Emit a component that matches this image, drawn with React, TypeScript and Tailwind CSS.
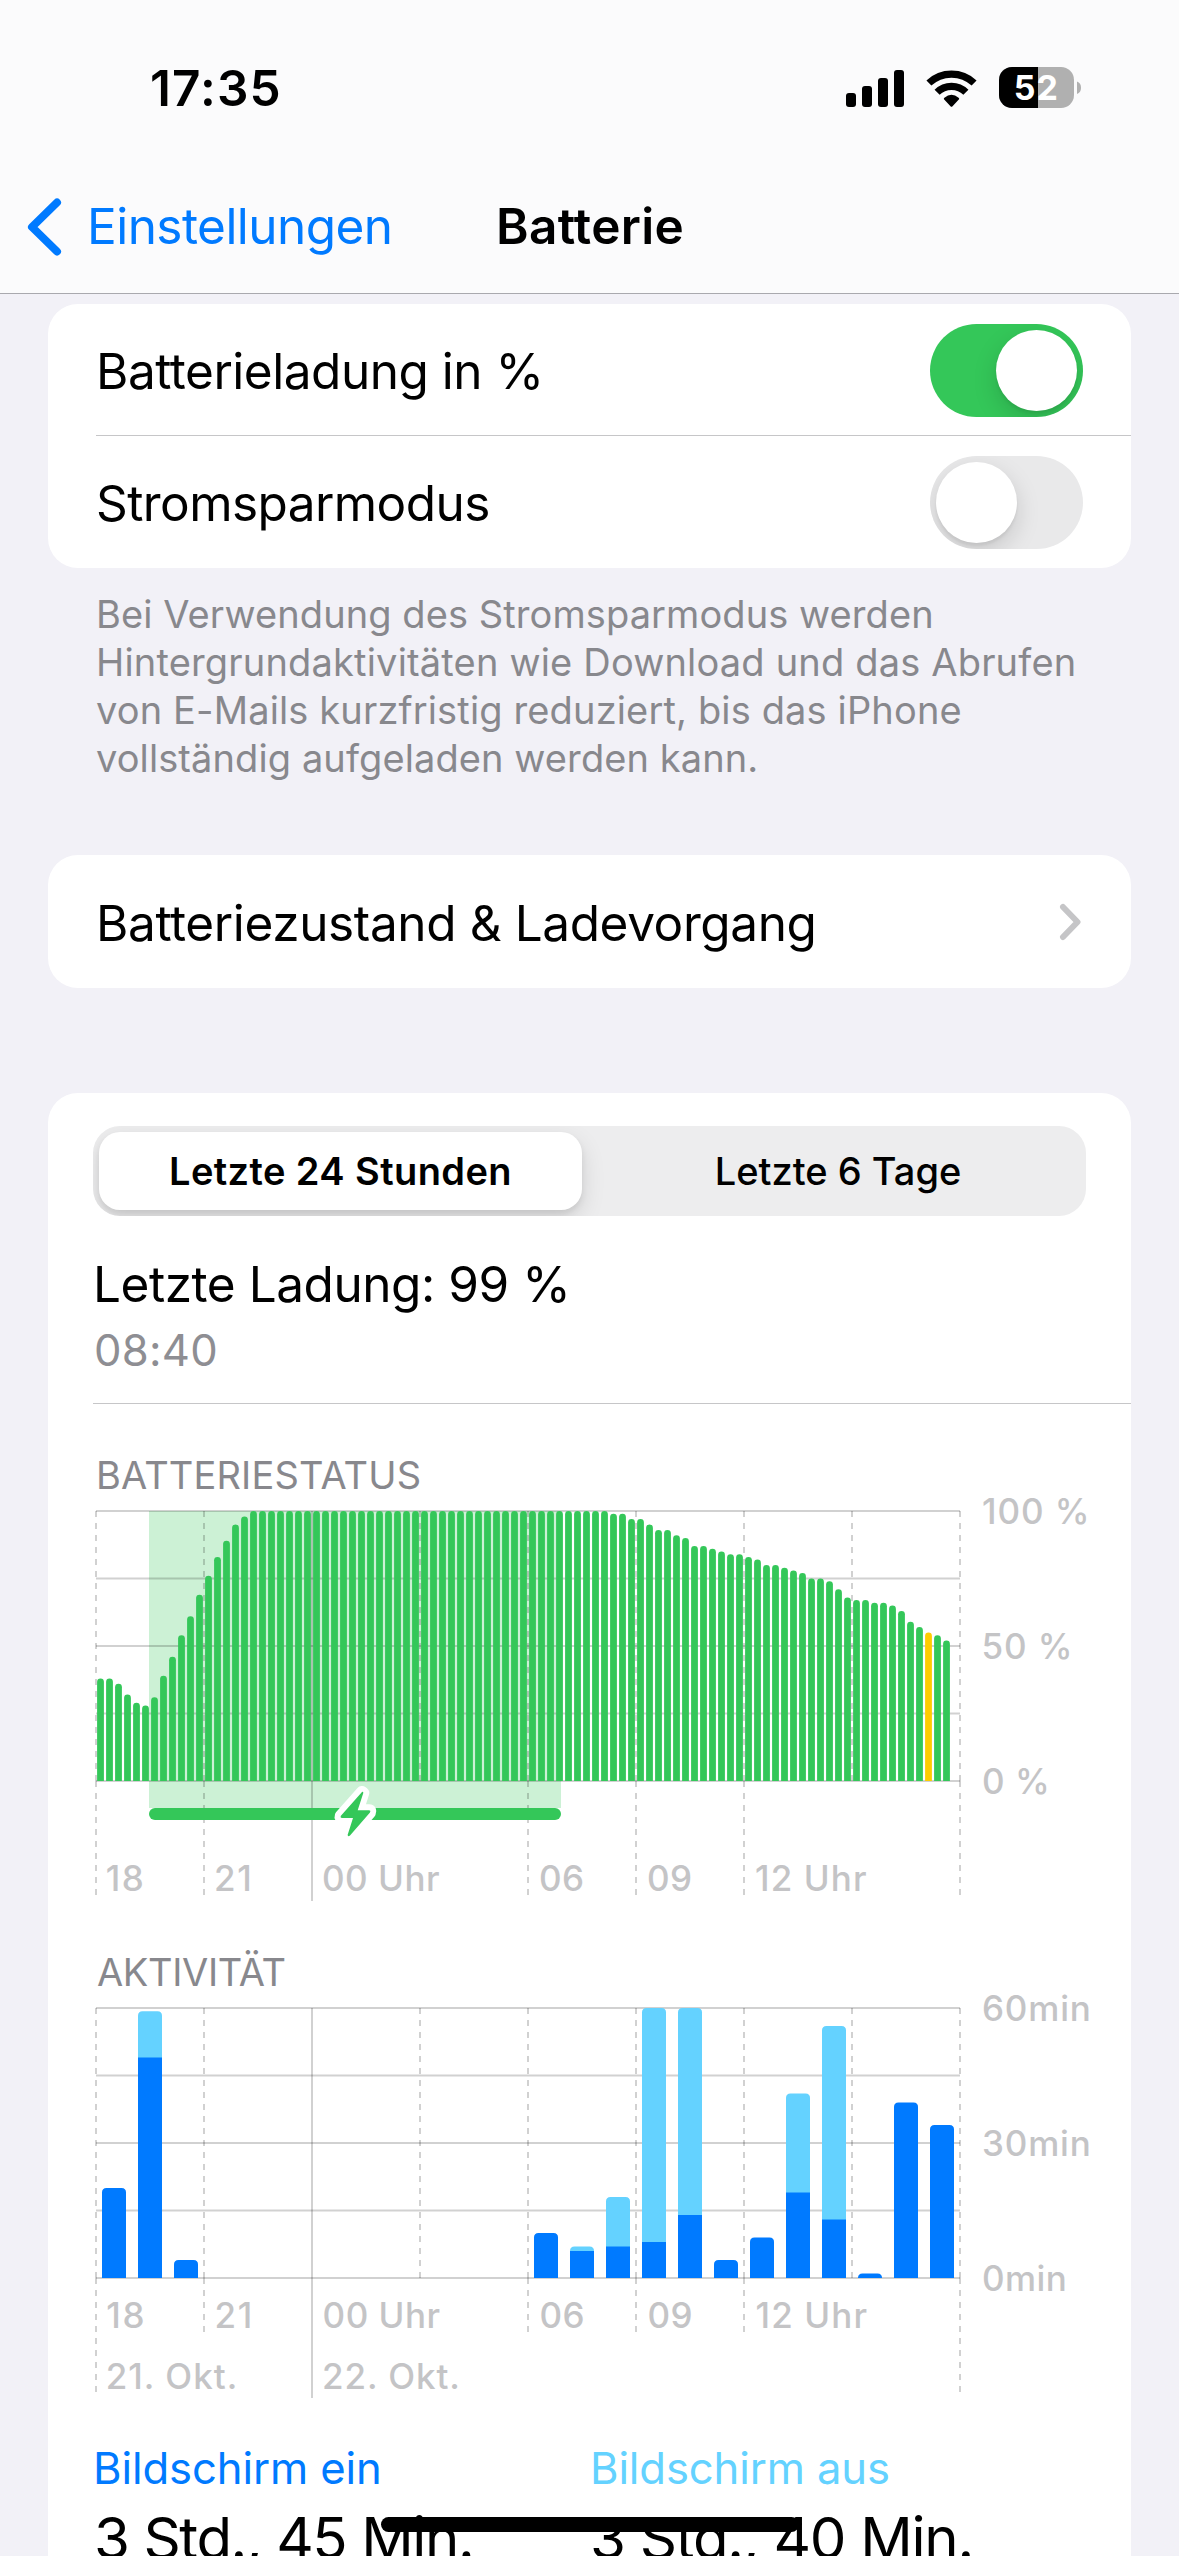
import React, { useState } from "react";

// battery level in percent, one value per 15 minutes
const levels = [
  38, 38, 36, 32, 29, 28, 31, 39, 46, 54, 61, 69, 76, 83, 89, 95, 98,
  ...Array(40).fill(100),
  99, 99, 97, 97, 95, 93, 93, 91, 90, 87, 87, 86, 85, 84, 84, 83, 82, 80, 80,
  79, 78, 77, 75, 75, 74, 71, 68, 67, 67, 66, 66, 65, 63, 59, 57, 55, 54, 52,
];
const lowPowerIndex = 92;

// minutes per hour: screen on / total
const activity = [
  { hour: 0, on: 20, total: 20 },
  { hour: 1, on: 49, total: 59.3 },
  { hour: 2, on: 4, total: 4 },
  { hour: 12, on: 10, total: 10 },
  { hour: 13, on: 6, total: 7 },
  { hour: 14, on: 7, total: 18 },
  { hour: 15, on: 8, total: 60 },
  { hour: 16, on: 14, total: 60 },
  { hour: 17, on: 4, total: 4 },
  { hour: 18, on: 9, total: 9 },
  { hour: 19, on: 19, total: 41 },
  { hour: 20, on: 13, total: 56 },
  { hour: 21, on: 1, total: 1 },
  { hour: 22, on: 39, total: 39 },
  { hour: 23, on: 34, total: 34 },
];

const hourLabels = [
  { x: 12.7, text: "18", spacing: 1.6 },
  { x: 121, text: "21", spacing: 1.6 },
  { x: 229, text: "00 Uhr", spacing: 0.5 },
  { x: 446, text: "06", spacing: 0.4 },
  { x: 554, text: "09", spacing: 0.4 },
  { x: 662, text: "12 Uhr", spacing: 1.1 },
];

const Toggle = ({ checked, onChange }: { checked: boolean; onChange: () => void }) => (
  <button
    type="button"
    role="switch"
    aria-checked={checked}
    onClick={onChange}
    className={`flex h-[93px] w-[153px] overflow-hidden rounded-full p-1.5 ${
      checked ? "justify-end bg-[#34c759]" : "justify-start bg-[#e9e9ea]"
    }`}
  >
    <span className="h-[81px] w-[81px] rounded-full bg-white shadow-[0_9px_24px_rgba(0,0,0,0.15),0_3px_3px_rgba(0,0,0,0.06)]" />
  </button>
);

const Grid = ({ top, longDash, lineEnd }: { top: number; longDash: number[]; lineEnd: number }) => {
  const bottom = top + 270;
  return (
    <g stroke="#000" strokeOpacity="0.18" strokeWidth="2">
      {[0, 1, 2, 3, 4].map((i) => (
        <line key={i} x1="3" x2="867" y1={top + i * 67.5} y2={top + i * 67.5} />
      ))}
      {[0, 1, 3, 4, 5, 6, 7, 8].map((i) => (
        <g key={i} strokeDasharray="6 6">
          <line x1={3 + i * 108} x2={3 + i * 108} y1={top} y2={bottom} />
          {i !== 3 && i !== 7 && (
            <line
              x1={3 + i * 108}
              x2={3 + i * 108}
              y1={bottom}
              y2={longDash.includes(i) ? bottom + 114 : lineEnd}
            />
          )}
        </g>
      ))}
      <line x1="219" x2="219" y1={top} y2={bottom + 120} />
    </g>
  );
};

const BatteryChart = () => (
  <svg width="1038" height="406" viewBox="0 0 1038 406" className="block overflow-visible">
    <rect x="56" y="11" width="412" height="297" fill="#34c759" fillOpacity="0.25" />
    <Grid top={11} longDash={[0, 1, 4, 5, 6, 8]} lineEnd={395} />
    {levels.map((level, i) => {
      const x = 4.1 + i * 9;
      const y = 281 - level * 2.7;
      return (
        <path
          key={i}
          d={`M${x} 281V${y + 3.4}a3.4 3.4 0 0 1 6.8 0V281Z`}
          fill={i === lowPowerIndex ? "#ffcc00" : "#34c759"}
        />
      );
    })}
    <rect x="56" y="308" width="412" height="12" rx="6" fill="#34c759" />
    <path
      d="M269 292L247.7 316Q247 318 249 318H260L254.6 335Q255 337 257 335.5L277 312.5Q278 310.3 276 310.3H264.7L270.3 293Z"
      fill="#fff"
      stroke="#fff"
      strokeWidth="12"
      strokeLinejoin="round"
    />
    <path
      d="M269 292L247.7 316Q247 318 249 318H260L254.6 335Q255 337 257 335.5L277 312.5Q278 310.3 276 310.3H264.7L270.3 293Q270.3 291.2 269 292Z"
      fill="#34c759"
    />
    <g fill="#c4c4c6" fontSize="35" fontWeight="500">
      {hourLabels.map((l) => (
        <text key={l.text} x={l.x} y="391" letterSpacing={l.spacing}>
          {l.text}
        </text>
      ))}
      <text x="889" y="24" letterSpacing="0.9">100 %</text>
      <text x="888.5" y="159" letterSpacing="0.9">50 %</text>
      <text x="889" y="294" letterSpacing="0.5">0 %</text>
    </g>
  </svg>
);

const ActivityChart = () => (
  <svg width="1038" height="408" viewBox="0 0 1038 408" className="block overflow-visible">
    <Grid top={12} longDash={[0, 8]} lineEnd={336} />
    {activity.map(({ hour, on, total }) => {
      const x = 9 + hour * 36;
      const y = 282 - total * 4.5;
      const r = Math.min(4.5, total * 4.5);
      return (
        <g key={hour}>
          <path
            d={`M${x} 282V${y + r}q0 ${-r} 4.5 ${-r}h15q4.5 0 4.5 ${r}V282Z`}
            fill={total > on ? "#64d2ff" : "#007aff"}
          />
          {total > on && <rect x={x} y={282 - on * 4.5} width="24" height={on * 4.5} fill="#007aff" />}
        </g>
      );
    })}
    <g fill="#c4c4c6" fontSize="35" fontWeight="500">
      {hourLabels.map((l) => (
        <text key={l.text} x={l.x + 0.6} y="331.5" letterSpacing={l.spacing}>
          {l.text}
        </text>
      ))}
      <text x="12.7" y="393" letterSpacing="1">21. Okt.</text>
      <text x="229" y="393" letterSpacing="0.9">22. Okt.</text>
      <text x="889" y="25" letterSpacing="0.8">60min</text>
      <text x="889" y="160" letterSpacing="0.8">30min</text>
      <text x="889" y="295" letterSpacing="0.4">0min</text>
    </g>
  </svg>
);

const StatusIcons = () => (
  <div className="flex items-center">
    <svg width="58" height="37" viewBox="0 0 58 37" className="mt-px">
      <rect x="0" y="23" width="10" height="14" rx="3" />
      <rect x="16" y="16" width="10" height="21" rx="3" />
      <rect x="32" y="8" width="10" height="29" rx="3" />
      <rect x="48" y="0" width="10" height="37" rx="3" />
    </svg>
    <svg width="51" height="37" viewBox="0 0 51 37" className="mt-px ml-[22px]">
      <g fill="none" stroke="#000" strokeWidth="7.2">
        <path d="M2.9 13A33 33 0 0 1 48.1 13" />
        <path d="M11.1 22.3A20.3 20.3 0 0 1 39.9 22.3" />
      </g>
      <path d="M18.2 29.6Q17.4 28.6 18.4 27.8Q25.5 21.8 32.6 27.8Q33.6 28.6 32.8 29.6L26.3 36.4Q25.5 37.2 24.7 36.4Z" />
    </svg>
    <svg width="83" height="41" viewBox="0 0 83 41" className="ml-[22px]">
      <defs>
        <clipPath id="body">
          <rect width="75" height="41" rx="13" />
        </clipPath>
      </defs>
      <g clipPath="url(#body)">
        <rect width="75" height="41" fill="#b0b0b0" />
        <rect width="39" height="41" />
      </g>
      <path d="M78 14.5Q82 16 82 20.7T78 27Z" fill="#b0b0b0" />
      <text x="14.8" y="33" fontSize="34" fontWeight="700" letterSpacing="0.9" fill="#fff">
        52
      </text>
    </svg>
  </div>
);

function App() {
  const [percent, setPercent] = useState(true);
  const [lowPower, setLowPower] = useState(false);
  const [range, setRange] = useState("day");

  const thumb = "rounded-[21px] bg-white font-semibold tracking-[0.41px] shadow-[0_9px_24px_rgba(0,0,0,0.12),0_4px_6px_rgba(0,0,0,0.08)]";
  const idle = "font-medium";

  return (
    <div className="relative h-[2556px] w-[1179px] overflow-hidden bg-[#f2f1f7] font-['Inter',sans-serif] text-black">
      <header className="h-[294px] border-b border-[#a9a9ae] bg-[#fbfbfc]">
        <div className="flex h-[175px] items-center justify-between pr-[97px] pl-[150px]">
          <span className="pt-0.5 text-[49.5px] leading-none font-semibold tracking-[1.13px]">17:35</span>
          <StatusIcons />
        </div>
        <div className="grid h-[104px] grid-cols-[1fr_auto_1fr] items-center text-[49.5px] leading-none">
          <button type="button" className="flex items-center pl-[27px] tracking-[-0.55px] text-[#007aff]">
            <svg width="35" height="60" viewBox="0 0 35 60" fill="none" className="mr-[25px]">
              <path d="M30 5.5L5 30L30 54.5" stroke="#007aff" strokeWidth="8" strokeLinecap="round" strokeLinejoin="round" />
            </svg>
            Einstellungen
          </button>
          <h1 className="pl-px font-semibold tracking-[0.3px]">Batterie</h1>
        </div>
      </header>

      <main className="px-12 pt-2.5">
        <section className="rounded-[30px] bg-white pl-12 text-[49.5px]">
          <div className="flex h-[132px] items-center justify-between border-b border-[#c6c6c8] pt-0.5 pr-12">
            <span className="pt-0.5 tracking-[-0.47px]">Batterieladung in %</span>
            <Toggle checked={percent} onChange={() => setPercent(!percent)} />
          </div>
          <div className="flex h-[132px] items-center justify-between pr-12">
            <span className="pt-0.5 tracking-[-0.57px]">Stromsparmodus</span>
            <Toggle checked={lowPower} onChange={() => setLowPower(!lowPower)} />
          </div>
        </section>

        <p className="pt-[22px] pl-12 text-[38px] leading-[48px] text-[#88888d]">
          <span className="block tracking-[0.08px]">Bei Verwendung des Stromsparmodus werden</span>
          <span className="block tracking-[0.18px]">Hintergrundaktivitäten wie Download und das Abrufen</span>
          <span className="block tracking-[0.14px]">von E-Mails kurzfristig reduziert, bis das iPhone</span>
          <span className="block tracking-[0.1px]">vollständig aufgeladen werden kann.</span>
        </p>

        <section className="mt-[73px] flex h-[133px] items-center justify-between rounded-[30px] bg-white pr-12 pl-12 text-[49.5px]">
          <span className="pt-[3px] tracking-[-0.38px]">Batteriezustand &amp; Ladevorgang</span>
          <svg width="24" height="38" viewBox="0 0 24 38" fill="none">
            <path d="M4 4L18.5 19L4 34" stroke="#c5c5c7" strokeWidth="6" strokeLinecap="round" strokeLinejoin="round" />
          </svg>
        </section>

        <section className="mt-[105px] h-[1600px] rounded-t-[30px] bg-white pt-[33px] pl-[45px]">
          <div className="mr-[45px] grid h-[90px] grid-cols-[483px_1fr] overflow-hidden rounded-[27px] bg-[#ededee] p-1.5 text-[38px] leading-none">
            <button type="button" onClick={() => setRange("day")} className={range === "day" ? thumb : idle}>
              Letzte 24 Stunden
            </button>
            <button type="button" onClick={() => setRange("week")} className={range === "week" ? thumb : `${idle} pl-3.5`}>
              Letzte 6 Tage
            </button>
          </div>
          <p className="pt-[38px] text-[49.5px] leading-[60px] tracking-[-0.45px]">Letzte Ladung: 99 %</p>
          <p className="h-[89px] pl-px text-[43.6px] leading-[73px] tracking-[0.28px] text-[#8e8e93]">08:40</p>
          <hr className="border-t border-[#c6c6c8]" />

          <h2 className="pt-[47px] pb-px pl-[3px] text-[38px] leading-[48px] tracking-[0.15px] text-[#88888d]">
            BATTERIESTATUS
          </h2>
          <BatteryChart />
          <h2 className="pt-[42px] pl-1 text-[38px] leading-[48px] tracking-[-0.35px] text-[#88888d]">AKTIVITÄT</h2>
          <ActivityChart />

          <div className="grid grid-cols-[497px_1fr] pt-10 text-[43.6px] leading-[50px]">
            <div className="tracking-[-0.08px]">
              <p className="text-[#007aff]">Bildschirm ein</p>
              <p className="pl-px text-[58.2px] leading-[88px] tracking-[-1.43px]">3 Std., 45 Min.</p>
            </div>
            <div className="tracking-[-0.11px]">
              <p className="text-[#64d2ff]">Bildschirm aus</p>
              <p className="text-[58.2px] leading-[88px] tracking-[-1.28px]">3 Std., 40 Min.</p>
            </div>
          </div>
        </section>
      </main>

      <div className="absolute bottom-6 left-[381px] h-[15px] w-[418px] rounded-full bg-black" />
    </div>
  );
}

export default App;
